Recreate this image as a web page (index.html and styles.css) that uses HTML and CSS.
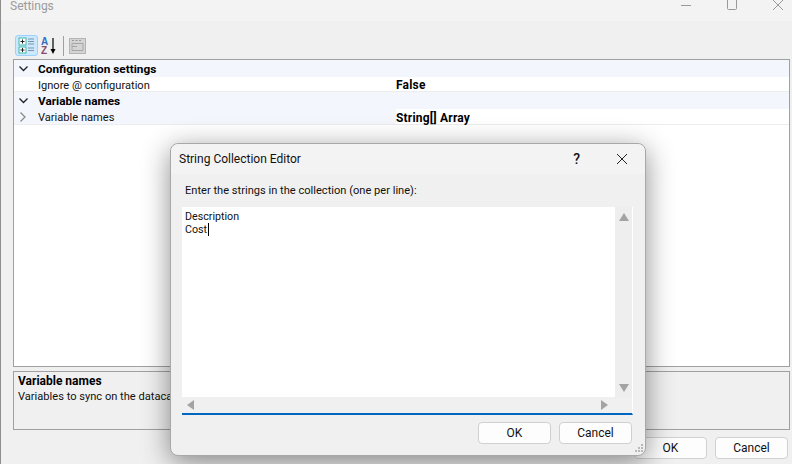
FILE: index.html
```html
<!DOCTYPE html>
<html lang="en">

<head>
    <meta charset="UTF-8">
    <meta name="viewport" content="width=device-width, initial-scale=1.0">
    <title>Settings</title>
    <link rel="stylesheet" href="styles.css">
</head>

<body>
    <div class="window">
        <div class="titlebar">
            <span class="title">Settings</span>
            <div class="controls">
                <svg class="control" width="46" height="12" viewBox="0 0 46 12"><path d="M18 5.500H28" /></svg>
                <svg class="control" width="46" height="12" viewBox="0 0 46 12"><path d="M18.500 -2H27.500V8.500Q27.500 9.500 26.500 9.500H19.500Q18.500 9.500 18.500 8.500Z" /></svg>
                <svg class="control" width="46" height="12" viewBox="0 0 46 12"><path d="M18 0L28 10M28 0L18 10" /></svg>
            </div>
        </div>

        <div class="toolbar">
            <button class="tool tool-active">
                <svg width="17" height="17" viewBox="0 0 17 17">
                    <rect x="1" y="1" width="7" height="7" fill="#fff" stroke="#3fb8a8" />
                    <rect x="1" y="10" width="7" height="6" fill="#fff" stroke="#3fb8a8" />
                    <path d="M2.500 4.500H6.500M4.500 2.500V6.500M2.500 13H6.500M4.500 11V15" stroke="#222" />
                    <path d="M10 2H16M10 4.500H16M10 7H16M10 11H16M10 13.500H16" stroke="#7d93a8" />
                </svg>
            </button>
            <button class="tool">
                <svg width="17" height="18" viewBox="0 0 17 18">
                    <text x="0" y="8" class="az az-a">A</text>
                    <text x="0" y="17" class="az az-z">Z</text>
                    <path d="M12 1V15" stroke="#000" stroke-width="1.200" />
                    <path d="M9.500 12L12 17L14.500 12Z" fill="#000" />
                </svg>
            </button>
            <span class="tool-sep"></span>
            <button class="tool tool-off">
                <svg width="17" height="16" viewBox="0 0 17 16">
                    <rect x="0.500" y="0.500" width="16" height="15" fill="#d4d4d4" stroke="#b4b4b4" />
                    <path d="M3 2.500H5M6.500 2.500H8.500M10 2.500H12" stroke="#9a9a9a" />
                    <path d="M3 5.500H14V12.500H3ZM3 8.500H8" fill="none" stroke="#a6a6a6" />
                </svg>
            </button>
        </div>

        <div class="grid">
            <div class="row row-cat">
                <span class="gutter"><svg width="9" height="6" viewBox="0 0 9 6"><path d="M0.500 0.500L4.500 4.500L8.500 0.500" class="chev" /></svg></span>
                <span class="cat-name">Configuration settings</span>
            </div>
            <div class="row row-prop">
                <span class="gutter"></span>
                <span class="prop-name">Ignore @ configuration</span>
                <span class="prop-value">False</span>
            </div>
            <div class="row row-cat">
                <span class="gutter"><svg width="9" height="6" viewBox="0 0 9 6"><path d="M0.500 0.500L4.500 4.500L8.500 0.500" class="chev" /></svg></span>
                <span class="cat-name">Variable names</span>
            </div>
            <div class="row row-prop row-sel">
                <span class="gutter"><svg width="6" height="10" viewBox="0 0 6 10"><path d="M0.500 0.500L5 5L0.500 9.500" class="chev chev-grey" /></svg></span>
                <span class="prop-name">Variable names</span>
                <span class="prop-value">String[] Array</span>
            </div>
        </div>

        <div class="desc">
            <div class="desc-title">Variable names</div>
            <div class="desc-text">Variables to sync on the datacards</div>
        </div>

        <div class="actions">
            <button class="btn">OK</button>
            <button class="btn">Cancel</button>
        </div>
    </div>

    <!-- String collection dialog on top of the window -->
    <div class="dialog">
        <div class="dialog-head">
            <span class="dialog-title">String Collection Editor</span>
            <span class="help">?</span>
            <svg class="dialog-close" width="12" height="12" viewBox="0 0 12 12"><path d="M1 1L11 11M11 1L1 11" /></svg>
        </div>
        <div class="dialog-body">
            <div class="prompt">Enter the strings in the collection (one per line):</div>
            <div class="editor">
                <div class="editor-text">Description<br>Cost<span class="caret"></span></div>
                <div class="vscroll">
                    <svg width="10" height="8" viewBox="0 0 10 8"><path d="M5 0L10 8H0Z" /></svg>
                    <svg width="10" height="8" viewBox="0 0 10 8"><path d="M5 8L0 0H10Z" /></svg>
                </div>
                <div class="hscroll">
                    <svg width="7" height="10" viewBox="0 0 7 10"><path d="M0 5L7 0V10Z" /></svg>
                    <svg width="7" height="10" viewBox="0 0 7 10"><path d="M7 5L0 0V10Z" /></svg>
                </div>
            </div>
            <div class="dialog-actions">
                <button class="btn">OK</button>
                <button class="btn">Cancel</button>
            </div>
        </div>
        <svg class="grip" width="9" height="9" viewBox="0 0 9 9">
            <path d="M7 0h2v2H7zM4 3h2v2H4zM7 3h2v2H7zM1 6h2v2H1zM4 6h2v2H4zM7 6h2v2H7z" />
        </svg>
    </div>
</body>

</html>
```

FILE: styles.css
```css
* {
    box-sizing: border-box;
}

body {
    margin: 0;
    width: 792px;
    height: 464px;
    overflow: hidden;
    font-family: Roboto, "Liberation Sans", Arial, sans-serif;
    font-size: 11.100px;
    color: #111;
    background-color: #f0f0f0;
}

.window {
    display: flex;
    flex-direction: column;
    height: 464px;
    border-left: 1px solid #8e8e8e;
}

.titlebar {
    display: flex;
    justify-content: space-between;
    height: 21px;
    background-color: #f3f3f3;
}

.title {
    padding-left: 9px;
    font-size: 12px;
    line-height: 12px;
    color: #9b9b9b;
}

.controls {
    display: flex;
    margin-right: -9px;
}

.control {
    fill: none;
    stroke: #9a9a9a;
}

.toolbar {
    display: flex;
    align-items: center;
    gap: 2px;
    height: 38px;
    padding: 11px 0 0 14px;
}

.tool {
    display: flex;
    align-items: center;
    justify-content: center;
    padding: 0;
    border: 1px solid transparent;
    background: none;
}

.tool-active {
    width: 23px;
    height: 21px;
    background-color: #cce8ff;
    border-color: #99d1ff;
    border-radius: 3px;
}

.az {
    font-family: "Liberation Sans", Arial, sans-serif;
    font-size: 10px;
    font-weight: bold;
}

.az-a {
    fill: #2f6fc4;
}

.az-z {
    fill: #8a4a6a;
}

.tool-sep {
    width: 1px;
    height: 20px;
    margin: 0 2px;
    background-color: #a0a0a0;
}

.grid {
    flex: 1;
    margin: 0 2px 0 12px;
    background-color: #fff;
    border: 1px solid #a0a0a0;
}

.row {
    display: flex;
    align-items: center;
}

.row-cat {
    height: 17px;
    background-color: #f3f6fc;
}

.row-prop {
    height: 15px;
    border-bottom: 1px solid #ededed;
}

.row-sel {
    height: 16px;
    background-color: #fff;
}

.row-sel .gutter,
.row-sel .prop-name {
    align-self: stretch;
    align-items: center;
    display: flex;
    background-color: #f3f6fc;
}

.gutter {
    display: flex;
    justify-content: center;
    width: 24px;
    flex: none;
    padding-right: 6px;
}

.chev {
    fill: none;
    stroke: #222;
    stroke-width: 1.300;
}

.chev-grey {
    stroke: #8a8a8a;
}

.cat-name {
    font-size: 11.800px;
    font-weight: bold;
    color: #000;
}

.prop-name {
    width: 358px;
    padding-top: 2px;
}

.prop-value {
    padding-top: 2px;
    font-size: 12px;
    font-weight: bold;
    letter-spacing: 0.200px;
    color: #000;
}

.desc {
    height: 59px;
    margin: 4px 2px 0 12px;
    padding: 2px 4px;
    border: 1px solid #a0a0a0;
    line-height: 15px;
}

.desc-title {
    font-size: 12px;
    font-weight: bold;
    color: #000;
}

.actions {
    display: flex;
    justify-content: flex-end;
    gap: 8px;
    height: 34px;
    padding: 7px 4px 0 0;
}

.btn {
    width: 73px;
    height: 22px;
    padding: 0;
    font-family: inherit;
    font-size: 12px;
    color: #111;
    background-color: #fdfdfd;
    border: 1px solid #d0d0d0;
    border-radius: 4px;
}

/* dialog */

.dialog {
    position: absolute;
    left: 170px;
    top: 143px;
    display: flex;
    flex-direction: column;
    width: 476px;
    height: 313px;
    background-color: #f0f0f0;
    border: 1px solid #a8a8a8;
    border-radius: 8px;
    box-shadow: 0 6px 28px rgba(0, 0, 0, 0.45);
}

.dialog-head {
    display: flex;
    align-items: center;
    height: 30px;
    padding: 0 17px 0 8px;
    font-size: 12px;
    background-color: #f3f3f3;
    border-radius: 8px 8px 0 0;
}

.dialog-title {
    flex: 1;
}

.help {
    margin-right: 36px;
    font-size: 14px;
    font-weight: 500;
}

.dialog-close {
    fill: none;
    stroke: #222;
}

.dialog-body {
    display: flex;
    flex-direction: column;
    flex: 1;
    padding: 9px 12px 0 11px;
}

.prompt {
    height: 24px;
    padding-left: 3px;
    line-height: 15px;
}

.editor {
    display: grid;
    grid-template-columns: 1fr 17px;
    grid-template-rows: 1fr 16px;
    height: 208px;
    background-color: #fff;
    border-right: 1px solid #fff;
    border-bottom: 2px solid #0067c0;
}

.editor-text {
    padding: 3px 3px;
    font-size: 10.700px;
    line-height: 13px;
}

.caret {
    display: inline-block;
    width: 1px;
    height: 13px;
    margin-left: 1px;
    vertical-align: top;
    background-color: #000;
}

.vscroll {
    display: flex;
    flex-direction: column;
    justify-content: space-between;
    align-items: center;
    padding: 6px 0 5px;
    background-color: #eee;
    fill: #a3a3a3;
}

.hscroll {
    grid-column: 1 / 3;
    display: flex;
    justify-content: space-between;
    align-items: center;
    padding: 0 24px 0 5px;
    background-color: #f0f0f0;
    fill: #a3a3a3;
}

.dialog-actions {
    display: flex;
    justify-content: flex-end;
    gap: 8px;
    margin: 7px 1px 0 0;
}

.grip {
    position: absolute;
    right: 2px;
    bottom: 2px;
    fill: #b8b8b8;
}
```
